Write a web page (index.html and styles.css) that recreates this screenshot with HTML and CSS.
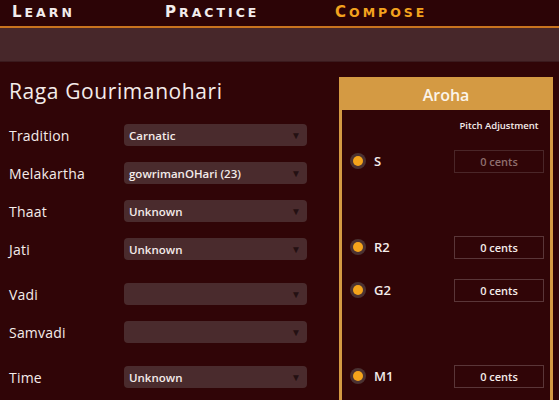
FILE: index.html
```html
<!DOCTYPE html>
<html lang="en">
<head>
<meta charset="utf-8">
<title>Compose - Raga Gourimanohari</title>
<link rel="stylesheet" href="styles.css">
</head>
<body>
<nav class="topnav">
  <a class="nav-link nav-learn">Learn</a>
  <a class="nav-link nav-practice">Practice</a>
  <a class="nav-link nav-compose active">Compose</a>
</nav>
<div class="subbar"></div>
<main class="main">
  <section class="details">
    <h1 class="title">Raga Gourimanohari</h1>
    <div class="row"><span class="label">Tradition</span><div class="select"><span>Carnatic</span><span class="arrow">▼</span></div></div>
    <div class="row"><span class="label">Melakartha</span><div class="select"><span>gowrimanOHari (23)</span><span class="arrow">▼</span></div></div>
    <div class="row"><span class="label">Thaat</span><div class="select"><span>Unknown</span><span class="arrow">▼</span></div></div>
    <div class="row"><span class="label">Jati</span><div class="select"><span>Unknown</span><span class="arrow">▼</span></div></div>
    <div class="row wide"><span class="label">Vadi</span><div class="select"><span></span><span class="arrow">▼</span></div></div>
    <div class="row"><span class="label">Samvadi</span><div class="select"><span></span><span class="arrow">▼</span></div></div>
    <div class="row wide"><span class="label">Time</span><div class="select"><span>Unknown</span><span class="arrow">▼</span></div></div>
  </section>
  <section class="card">
    <div class="card-head">Aroha</div>
    <div class="card-body">
      <div class="pitch-head">Pitch Adjustment</div>
      <div class="swara"><span class="radio"></span><span class="note">S</span><div class="cents disabled">0 cents</div></div>
      <div class="swara skip2"><span class="radio"></span><span class="note">R2</span><div class="cents">0 cents</div></div>
      <div class="swara"><span class="radio"></span><span class="note">G2</span><div class="cents">0 cents</div></div>
      <div class="swara skip2"><span class="radio"></span><span class="note">M1</span><div class="cents">0 cents</div></div>
    </div>
  </section>
</main>
</body>
</html>
```
FILE: styles.css
```css
* { box-sizing: border-box; }
html, body { margin: 0; padding: 0; }
body {
  width: 559px;
  height: 400px;
  overflow: hidden;
  background: #300507;
  color: #f4ecea;
  font-family: "Open Sans", "Liberation Sans", sans-serif;
}
.topnav {
  height: 28px;
  border-bottom: 2px solid #c8741f;
  background: #2c0406;
  display: flex;
  align-items: center;
  padding-left: 12px;
}
.nav-link {
  display: inline-block;
  font-family: "DejaVu Sans", sans-serif;
  font-weight: bold;
  text-transform: uppercase;
  font-size: 12.5px;
  letter-spacing: 3px;
  color: #f2ecec;
  line-height: 1;
  padding-bottom: 2px;
}
.nav-link::first-letter {
  font-size: 15px;
}
.nav-learn { width: 153px; }
.nav-practice { width: 170px; }
.active { color: #f3a21e; }
.subbar {
  height: 34px;
  background: #47272a;
  border-bottom: 1px solid #3a1a1d;
}
.main {
  display: flex;
  padding-top: 15px;
}
.details {
  padding-left: 9px;
  width: 307px;
}
.title {
  margin: 0;
  font-weight: 400;
  font-size: 21px;
  line-height: 28px;
  letter-spacing: 0.6px;
  margin-bottom: 19px;
}
.row {
  display: flex;
  align-items: center;
  height: 22px;
  margin-bottom: 16px;
}
.row.wide { margin-top: 23px; }
.label {
  width: 115px;
  font-size: 14px;
  letter-spacing: 0.2px;
}
.select {
  width: 183px;
  height: 22px;
  background: #4a2b2d;
  border-radius: 4px;
  display: flex;
  align-items: center;
  justify-content: space-between;
  padding: 0 6px 0 5px;
  font-size: 11.5px;
  font-weight: 600;
  color: #f4ecea;
}
.arrow {
  font-size: 10px;
  color: #241012;
}
.card {
  margin-left: auto;
  margin-right: 6px;
  width: 214px;
  height: 340px;
  border: 3px solid #d49a43;
  border-bottom: none;
  background: #300507;
}
.card-head {
  background: #d49a43;
  height: 30px;
  display: flex;
  align-items: center;
  justify-content: center;
  font-size: 16px;
  font-weight: 600;
  color: #fbf4ea;
}
.card-body {
  padding: 9px 6px 0 8px;
}
.pitch-head {
  margin-left: auto;
  width: 90px;
  text-align: center;
  font-size: 9.5px;
  font-weight: 600;
  line-height: 14px;
  margin-bottom: 17px;
}
.swara {
  display: flex;
  align-items: center;
  height: 22px;
  margin-bottom: 21px;
}
.swara.skip2 { margin-top: 64px; }
.radio {
  width: 16px;
  height: 16px;
  border-radius: 50%;
  background: #4b3232;
  display: flex;
  align-items: center;
  justify-content: center;
}
.radio::after {
  content: "";
  width: 10px;
  height: 10px;
  border-radius: 50%;
  background: #f5a41b;
}
.note {
  margin-left: 8px;
  font-size: 13px;
  font-weight: 600;
}
.cents {
  margin-left: auto;
  width: 90px;
  height: 23px;
  border: 1px solid #5a3638;
  display: flex;
  align-items: center;
  justify-content: center;
  font-size: 11px;
  font-weight: 600;
  color: #f4ecea;
}
.cents.disabled {
  color: #8f6e6e;
  border-color: #4a2628;
}
```
